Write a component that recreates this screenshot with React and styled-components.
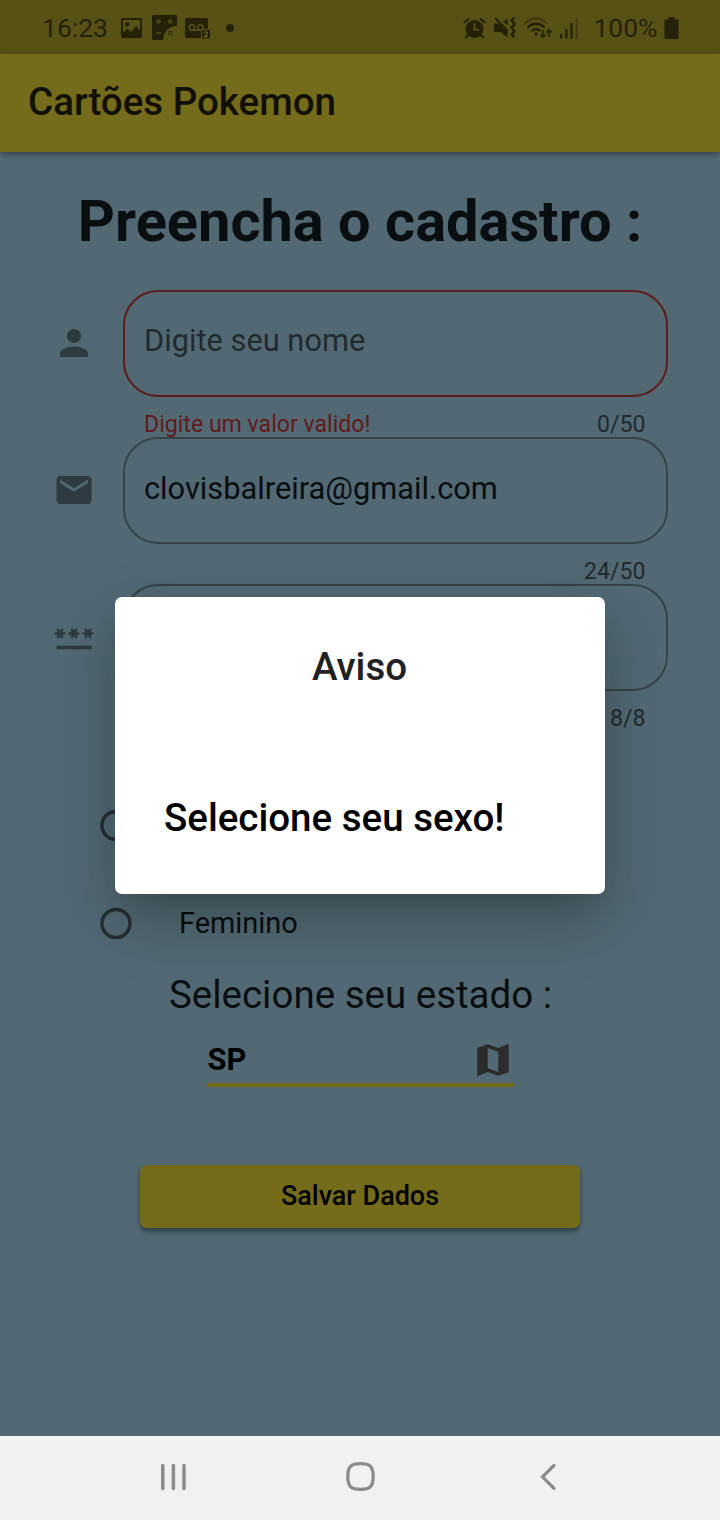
import React from "react";
import styled, { createGlobalStyle } from "styled-components";

const Global = createGlobalStyle`
  * { box-sizing: border-box; }
  body { margin: 0; background: #526973; font-family: Roboto, "Liberation Sans", sans-serif; }
`;

const Phone = styled.div`
  position: relative;
  width: 720px;
  height: 1520px;
  overflow: hidden;
  display: flex;
  flex-direction: column;
  background: #526973;
`;

const StatusBar = styled.header`
  display: flex;
  flex: none;
  align-items: center;
  height: 54px;
  padding: 2px 41.500px 0 42px;
  background: #575116;
  color: #242108;
  z-index: 1;
`;

const StatusText = styled.span`
  font-size: 26.5px;
  line-height: 32px;
  margin-right: ${(p) => p.$gap || 0}px;
`;

const StatusIcon = styled.svg`
  display: block;
  flex: none;
  margin-right: ${(p) => p.$gap || 0}px;
`;

const Spacer = styled.div`
  flex: 1;
`;

const AppBar = styled.div`
  display: flex;
  flex: none;
  align-items: center;
  height: 98px;
  padding: 0 28px 3px;
  background: #746b1b;
  box-shadow: 0 3px 7px rgba(0, 0, 0, 0.22), 0 1px 4px rgba(0, 0, 0, 0.2);
  z-index: 1;
`;

const AppTitle = styled.h1`
  margin: 0;
  font-size: 38.5px;
  line-height: 45px;
  font-weight: 500;
  color: #111003;
`;

const Page = styled.main`
  flex: 1;
  display: flex;
  flex-direction: column;
  align-items: center;
  padding-top: 35px;
`;

const Heading = styled.h2`
  margin: 0 0 35px;
  font-size: 57.75px;
  line-height: 68px;
  font-weight: 700;
  color: #090e11;
  white-space: nowrap;
`;

const FieldRow = styled.div`
  display: flex;
  width: 615px;
  height: 147px;
  gap: 28px;
`;

const FieldIcon = styled.svg`
  flex: none;
  width: 42px;
  height: 42px;
  margin-top: 32px;
  fill: #2d3a3f;
`;

const FieldColumn = styled.div`
  flex: 1;
`;

const InputBox = styled.div`
  display: flex;
  align-items: center;
  height: 107px;
  padding: 0 19.5px ${(p) => (p.$placeholder ? 6 : 4)}px;
  border: 2px solid ${(p) => (p.$error ? "#5f1c1e" : "#354349")};
  border-radius: 35px;
  font-size: 30.8px;
  color: ${(p) => (p.$placeholder ? "#212a2e" : "#090e11")};
`;

const Helper = styled.div`
  display: flex;
  justify-content: space-between;
  padding: 14px 22px 0 21.5px;
  font-size: 23.1px;
  line-height: 27px;
  color: #212a2e;
`;

const ErrorText = styled.span`
  color: #611a1b;
`;

const RadioGroup = styled.div`
  width: 520px;
  margin-top: 45px;
`;

const RadioRow = styled.label`
  display: flex;
  align-items: center;
  height: 98px;
  gap: 47px;
  font-size: 28.9px;
  color: #090e11;
`;

const RadioDot = styled.svg`
  width: 32px;
  height: 32px;
  fill: none;
  stroke: #252f34;
  stroke-width: 3.5px;
`;

const RadioLabel = styled.span`
  padding-bottom: 1px;
`;

const StateLabel = styled.div`
  padding-left: 1px;
  font-size: 38.5px;
  line-height: 45px;
  color: #090e11;
`;

const Select = styled.div`
  display: flex;
  align-items: center;
  justify-content: space-between;
  width: 307px;
  height: 70px;
  padding: 18px 0 0 1px;
  border-bottom: 4px solid #746b1b;
  font-size: 30.8px;
  font-weight: 700;
  color: #000;
`;

const SelectIcon = styled.svg`
  width: 42px;
  height: 42px;
  margin-top: 1px;
  fill: #2c2c2c;
`;

const SaveButton = styled.button`
  width: 440px;
  height: 63px;
  margin-top: 78px;
  padding: 0 0 1px;
  border: 0;
  border-radius: 7px;
  background: #746b1b;
  color: #000;
  font: 500 26.95px Roboto, sans-serif;
  box-shadow: 0 4px 4px rgba(0, 0, 0, 0.3), 0 1px 5px rgba(0, 0, 0, 0.15);
`;

const NavBar = styled.nav`
  display: flex;
  flex: none;
  align-items: center;
  justify-content: space-between;
  height: 84px;
  padding: 0 157px 5px 154px;
  background: #f1f1f1;
  z-index: 3;
`;

const Dialog = styled.section`
  position: absolute;
  left: 115px;
  top: 596.5px;
  width: 490px;
  height: 297px;
  padding: 47px 50px 0 49px;
  border-radius: 7px;
  background: #fff;
  box-shadow: 0 14px 26px -10px rgba(0, 0, 0, 0.16), 0 34px 62px 0 rgba(0, 0, 0, 0.14),
    0 14px 60px 4px rgba(0, 0, 0, 0.09);
  z-index: 2;
`;

const DialogTitle = styled.div`
  text-align: center;
  font-size: 38.5px;
  line-height: 45px;
  font-weight: 500;
  color: #212121;
`;

const DialogMessage = styled.div`
  margin-top: 106px;
  font-size: 38.5px;
  line-height: 45px;
  font-weight: 500;
  color: #000;
  white-space: nowrap;
`;

const PERSON = "M12 12c2.21 0 4-1.79 4-4s-1.79-4-4-4-4 1.79-4 4 1.79 4 4 4zm0 2c-2.67 0-8 1.34-8 4v2h16v-2c0-2.66-5.33-4-8-4z";
const MAIL = "M20 4H4c-1.1 0-1.99.9-1.99 2L2 18c0 1.1.9 2 2 2h16c1.1 0 2-.9 2-2V6c0-1.1-.9-2-2-2zm0 4l-8 5-8-5V6l8 5 8-5v2z";
const PASSWORD = "M2 17h20v2H2v-2zm1.15-4.05L4 11.47l.85 1.48 1.3-.75-.85-1.48H7v-1.5H5.3l.85-1.47L4.85 7 4 8.47 3.15 7l-1.3.75.85 1.47H1v1.5h1.7l-.85 1.48 1.3.75zm6.7-.75l1.3.75.85-1.48.85 1.48 1.3-.75-.85-1.48H15v-1.5h-1.7l.85-1.47-1.3-.75L12 8.47 11.15 7l-1.3.75.85 1.47H9v1.5h1.7l-.85 1.48zM23 9.22h-1.7l.85-1.47-1.3-.75L20 8.47 19.15 7l-1.3.75.85 1.47H17v1.5h1.7l-.85 1.48 1.3.75.85-1.48.85 1.48 1.3-.75-.85-1.48H23v-1.5z";
const MAP = "M15 5.1L9 3 3 5.02v16.2l6-2.33 6 2.1 6-2.02V2.77L15 5.1zm0 13.79l-6-2.11V5.11l6 2.11v11.67z";

function Field({ icon, value, placeholder, error, count }) {
  return (
    <FieldRow>
      <FieldIcon viewBox="0 0 24 24"><path d={icon} /></FieldIcon>
      <FieldColumn>
        <InputBox $error={!!error} $placeholder={!value}>{value || placeholder}</InputBox>
        <Helper>
          <ErrorText>{error}</ErrorText>
          <span>{count}</span>
        </Helper>
      </FieldColumn>
    </FieldRow>
  );
}

function Radio({ label }) {
  return (
    <RadioRow>
      <RadioDot viewBox="0 0 32 32"><circle cx="16" cy="16.500" r="14" /></RadioDot>
      {label && <RadioLabel>{label}</RadioLabel>}
    </RadioRow>
  );
}

function StatusIcons() {
  return (
    <>
      <StatusIcon $gap={10} width="21" height="20" viewBox="0 0 21 20" fill="none" stroke="#242108">
        <rect x="1" y="1" width="19" height="18" rx="1" strokeWidth="2" />
        <circle cx="6.2" cy="6.2" r="2.2" fill="#242108" stroke="none" />
        <path d="M2 14.500l4.500-4 3.500 3.500 5-6 5 6v5H2z" fill="#242108" stroke="none" />
      </StatusIcon>
      <StatusIcon $gap={8} width="25" height="26" viewBox="0 0 25 26">
        <path d="M1.500 0h22q1.500 0 1.500 1.500V11C17 11 11 17 11 25H1.500Q0 25 0 23.500V1.500Q0 0 1.500 0z" fill="#242108" />
        <path d="M6.500 4v5M4 6.500h5M4 18h5M16.300 4.800l3.600 3.600M19.900 4.800l-3.600 3.600" stroke="#575116" strokeWidth="1.400" />
        <path d="M16 17h5M16 19.500h5" stroke="#242108" strokeWidth="1.200" />
      </StatusIcon>
      <StatusIcon $gap={16} width="25" height="21" viewBox="0 0 25 21">
        <path d="M1.500 0h20q1.500 0 1.500 1.500V20H1.500Q0 20 0 18.500v-17Q0 0 1.500 0z" fill="#242108" />
        <g fill="none" stroke="#575116" strokeWidth="1.600">
          <circle cx="7" cy="9.500" r="2.700" />
          <circle cx="15.500" cy="9.500" r="2.700" />
          <path d="M7 12.200h8.500" />
        </g>
        <path d="M16 11h9v10h-9z" fill="#575116" />
        <rect x="17" y="12" width="8" height="8.500" rx="1" fill="#242108" />
        <path d="M19.300 14.800q.3-1 1.600-1 1.600 0 1.600 1.300 0 1-3 3.500h3.300" fill="none" stroke="#6f691f" strokeWidth="1.100" />
      </StatusIcon>
      <StatusIcon width="9" height="9" viewBox="0 0 9 9"><circle cx="4" cy="4" r="4" fill="#242108" /></StatusIcon>
    </>
  );
}

function SystemIcons() {
  return (
    <>
      <StatusIcon $gap={8} width="23" height="23" viewBox="0 0 23 23" fill="none" stroke="#242108">
        <circle cx="11.500" cy="12" r="9" fill="#242108" stroke="none" />
        <path d="M1 6l5-4.500M22 6l-5-4.500" strokeWidth="2.200" />
        <path d="M5 18l-2.500 3M18 18l2.500 3" strokeWidth="2.400" />
        <path d="M11.500 6.500v6.200h4.500" stroke="#575116" strokeWidth="1.900" />
      </StatusIcon>
      <StatusIcon $gap={8} width="22" height="22" viewBox="0 0 22 22">
        <path d="M0 6.500h5l8.500 8.500v5.500L6.500 15H0zM13.500 1v7.500L9.300 4.500z" fill="#242108" />
        <path d="M1 1l13 13" stroke="#242108" strokeWidth="1.800" />
        <path d="M20.500 .5l-3 3 3 3.500-3 3.500 3 3.500-3 3.500 3 3" stroke="#242108" strokeWidth="2.300" fill="none" />
      </StatusIcon>
      <StatusIcon $gap={8} width="28" height="22" viewBox="0 0 28 22" fill="none" stroke="#242108" strokeWidth="2.200">
        <path d="M1 6.500Q12 -3.500 23 6.500" opacity=".45" />
        <path d="M3.500 10.500q8.500-7.500 17 0M7.500 14.200q4.500-4 9 0" />
        <circle cx="12" cy="17" r="1.700" fill="#242108" stroke="none" />
        <path d="M19 13v7M16.500 17.500L19 20l2.500-2.500M25 20v-7M22.500 15.500L25 13l2.500 2.500" strokeWidth="1.700" />
      </StatusIcon>
      <StatusIcon $gap={14} width="19" height="21" viewBox="0 0 19 21" fill="#242108">
        <rect x="0" y="16" width="2.300" height="4.500" />
        <rect x="5.200" y="11" width="2.300" height="9.500" />
        <rect x="10.400" y="5" width="2.300" height="15.500" />
        <rect x="15.600" y="0" width="2.300" height="20.500" opacity=".4" />
      </StatusIcon>
    </>
  );
}

export default function App() {
  return (
    <Phone>
      <Global />
      <StatusBar>
        <StatusText $gap={13}>16:23</StatusText>
        <StatusIcons />
        <Spacer />
        <SystemIcons />
        <StatusText $gap={6}>100%</StatusText>
        <StatusIcon width="15" height="23" viewBox="0 0 15 23" fill="#242108">
          <path d="M4.500 0h6v2.500H13.500q1 0 1 1v17.500q0 1-1 1H1.500q-1 0-1-1V3.500q0-1 1-1h3z" />
        </StatusIcon>
      </StatusBar>
      <AppBar><AppTitle>Cartões Pokemon</AppTitle></AppBar>
      <Page>
        <Heading>Preencha o cadastro :</Heading>
        <Field icon={PERSON} placeholder="Digite seu nome" error="Digite um valor valido!" count="0/50" />
        <Field icon={MAIL} value="clovisbalreira@gmail.com" count="24/50" />
        <Field icon={PASSWORD} count="8/8" />
        <RadioGroup>
          <Radio />
          <Radio label="Feminino" />
        </RadioGroup>
        <StateLabel>Selecione seu estado :</StateLabel>
        <Select>
          SP
          <SelectIcon viewBox="0 0 24 24"><path d={MAP} /></SelectIcon>
        </Select>
        <SaveButton>Salvar Dados</SaveButton>
      </Page>
      <Dialog>
        <DialogTitle>Aviso</DialogTitle>
        <DialogMessage>Selecione seu sexo!</DialogMessage>
      </Dialog>
      <NavBar>
        <svg width="38" height="32" viewBox="0 0 38 32" fill="none" stroke="#8b8b8b" strokeWidth="3.500" strokeLinecap="round">
          <path d="M8.800 5.500v23M19.400 5.500v23M30 5.500v23" />
        </svg>
        <svg width="32" height="32" viewBox="0 0 32 32" fill="none" stroke="#8b8b8b" strokeWidth="3.300">
          <path d="M14.500 3.700c9.700 0 12.700 3 12.700 12.800S24.200 29.300 14.500 29.300 1.800 26.300 1.800 16.500 4.800 3.700 14.500 3.700z" />
        </svg>
        <svg width="32" height="32" viewBox="0 0 32 32" fill="none" stroke="#8b8b8b" strokeWidth="3.200" strokeLinecap="round">
          <path d="M23 5.500L11.500 16.800l11.500 11.500" />
        </svg>
      </NavBar>
    </Phone>
  );
}
